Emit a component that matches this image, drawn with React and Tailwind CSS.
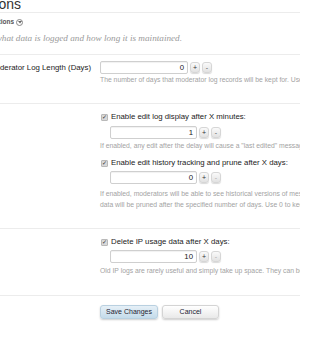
import React from "react";

const sans = { fontFamily: '"Liberation Sans", Arial, sans-serif' };

const Spin = ({ dim }) => (
  <div className="flex items-center gap-[2px]">
    <button className="w-[10px] h-[11px] flex items-center justify-center rounded-[3px] border border-[#d6d6d6] bg-gradient-to-b from-[#fafafa] to-[#e2e2e2] shadow-[0_1px_1px_rgba(0,0,0,0.15)] text-[7px] leading-none text-[#333]">
      +
    </button>
    <button
      className={`w-[10px] h-[11px] flex items-center justify-center rounded-[3px] border border-[#d6d6d6] bg-gradient-to-b from-[#fafafa] to-[#e2e2e2] shadow-[0_1px_1px_rgba(0,0,0,0.15)] text-[7px] leading-none ${
        dim ? "text-[#aaa]" : "text-[#555]"
      }`}
    >
      -
    </button>
  </div>
);

const NumberBox = ({ value, width, dim }) => (
  <div className="flex items-center gap-[2px]">
    <div
      className={`${width} h-[13px] flex items-center justify-end pr-[3px] rounded-[2px] border border-[#cfcfcf] bg-white shadow-[inset_0_1px_1px_rgba(0,0,0,0.06)] text-[7.8px] text-[#222]`}
    >
      {value}
    </div>
    <Spin dim={dim} />
  </div>
);

const Check = ({ label }) => (
  <div className="flex items-center h-[10px] pl-[1px]">
    <span className="w-[7px] h-[7px] shrink-0 flex items-center justify-center rounded-[1px] border border-[#b9b9b9] bg-[#d9d9d9] text-[6px] leading-none text-[#333]">
      ✓
    </span>
    <span className="ml-[3px] text-[7.8px] text-[#222] whitespace-nowrap">
      {label}
    </span>
  </div>
);

const Help = ({ children }) => (
  <p className="text-[6.8px] leading-[11px] text-[#a3a3a3] whitespace-nowrap">
    {children}
  </p>
);

export default function App() {
  return (
    <div className="w-[300px] h-[337px] overflow-hidden bg-white" style={sans}>
      {/* title */}
      <div className="h-[16px] border-b border-[#ececec]">
        <div className="w-[21px] flex justify-end overflow-hidden whitespace-nowrap -mt-[3px] text-[14px] leading-[14px] text-[#333]">
          Logging Options
        </div>
      </div>

      {/* breadcrumb + description */}
      <div className="h-[42px] border-b border-[#ececec]">
        <div className="h-[18px] flex items-center">
          <div className="w-[14px] shrink-0 flex justify-end overflow-hidden whitespace-nowrap text-[6.5px] font-bold text-[#555]">
            Options
          </div>
          <span className="ml-[2px] w-[7px] h-[7px] rounded-full border border-[#888] flex items-center justify-center">
            <svg width="4" height="3" viewBox="0 0 4 3">
              <path d="M0 0 L2 2.5 L4 0 Z" fill="#666" />
            </svg>
          </span>
        </div>
        <div
          className="h-[16px] w-[182px] flex items-center justify-end overflow-hidden whitespace-nowrap italic text-[9.2px] text-[#9a9a9a]"
          style={{ fontFamily: '"Liberation Serif", Georgia, serif' }}
        >
          These options control what data is logged and how long it is maintained.
        </div>
      </div>

      {/* moderator log length */}
      <div className="h-[49px] border-b border-[#ececec] flex pt-[6px]">
        <div className="w-[95px] shrink-0 pr-[4px] h-[13px] flex items-center justify-end overflow-hidden whitespace-nowrap text-[7.8px] text-[#222]">
          Moderator Log Length (Days)
        </div>
        <div className="pl-[5px] min-w-0">
          <NumberBox value="0" width="w-[88px]" />
          <Help>
            The number of days that moderator log records will be kept for. Use 0 to
            keep them forever.
          </Help>
        </div>
      </div>

      {/* edit logging */}
      <div className="h-[125px] border-b border-[#ececec] pl-[100px] pt-[8px]">
        <Check label="Enable edit log display after X minutes:" />
        <div className="pl-[10px] mt-[4px]">
          <NumberBox value="1" width="w-[87px]" />
        </div>
        <div className="mt-[1px]">
          <Help>
            If enabled, any edit after the delay will cause a "last edited" message to be
            displayed.
          </Help>
        </div>
        <div className="mt-[7px]">
          <Check label="Enable edit history tracking and prune after X days:" />
        </div>
        <div className="pl-[10px] mt-[3px]">
          <NumberBox value="0" width="w-[87px]" dim />
        </div>
        <div className="mt-[4px]">
          <Help>
            If enabled, moderators will be able to see historical versions of messages.
          </Help>
          <Help>
            data will be pruned after the specified number of days. Use 0 to keep all
            data.
          </Help>
        </div>
      </div>

      {/* IP logging */}
      <div className="h-[67px] border-b border-[#ececec] pl-[100px] pt-[8px]">
        <Check label="Delete IP usage data after X days:" />
        <div className="pl-[10px] mt-[3px]">
          <NumberBox value="10" width="w-[87px]" dim />
        </div>
        <div className="mt-[2px]">
          <Help>
            Old IP logs are rarely useful and simply take up space. They can be
            permanently removed.
          </Help>
        </div>
      </div>

      {/* actions */}
      <div className="pl-[100px] pt-[9px] flex gap-[4px]">
        <button className="w-[58px] h-[14px] rounded-[3px] border border-[#b9d0e0] bg-gradient-to-b from-[#e6f0f7] to-[#c4dbea] shadow-[0_1px_2px_rgba(0,0,0,0.2)] text-[7px] text-[#223]">
          Save Changes
        </button>
        <button className="w-[57px] h-[14px] rounded-[3px] border border-[#d4d4d4] bg-gradient-to-b from-[#ffffff] to-[#e9e9e9] shadow-[0_1px_2px_rgba(0,0,0,0.2)] text-[7px] text-[#223]">
          Cancel
        </button>
      </div>
    </div>
  );
}
